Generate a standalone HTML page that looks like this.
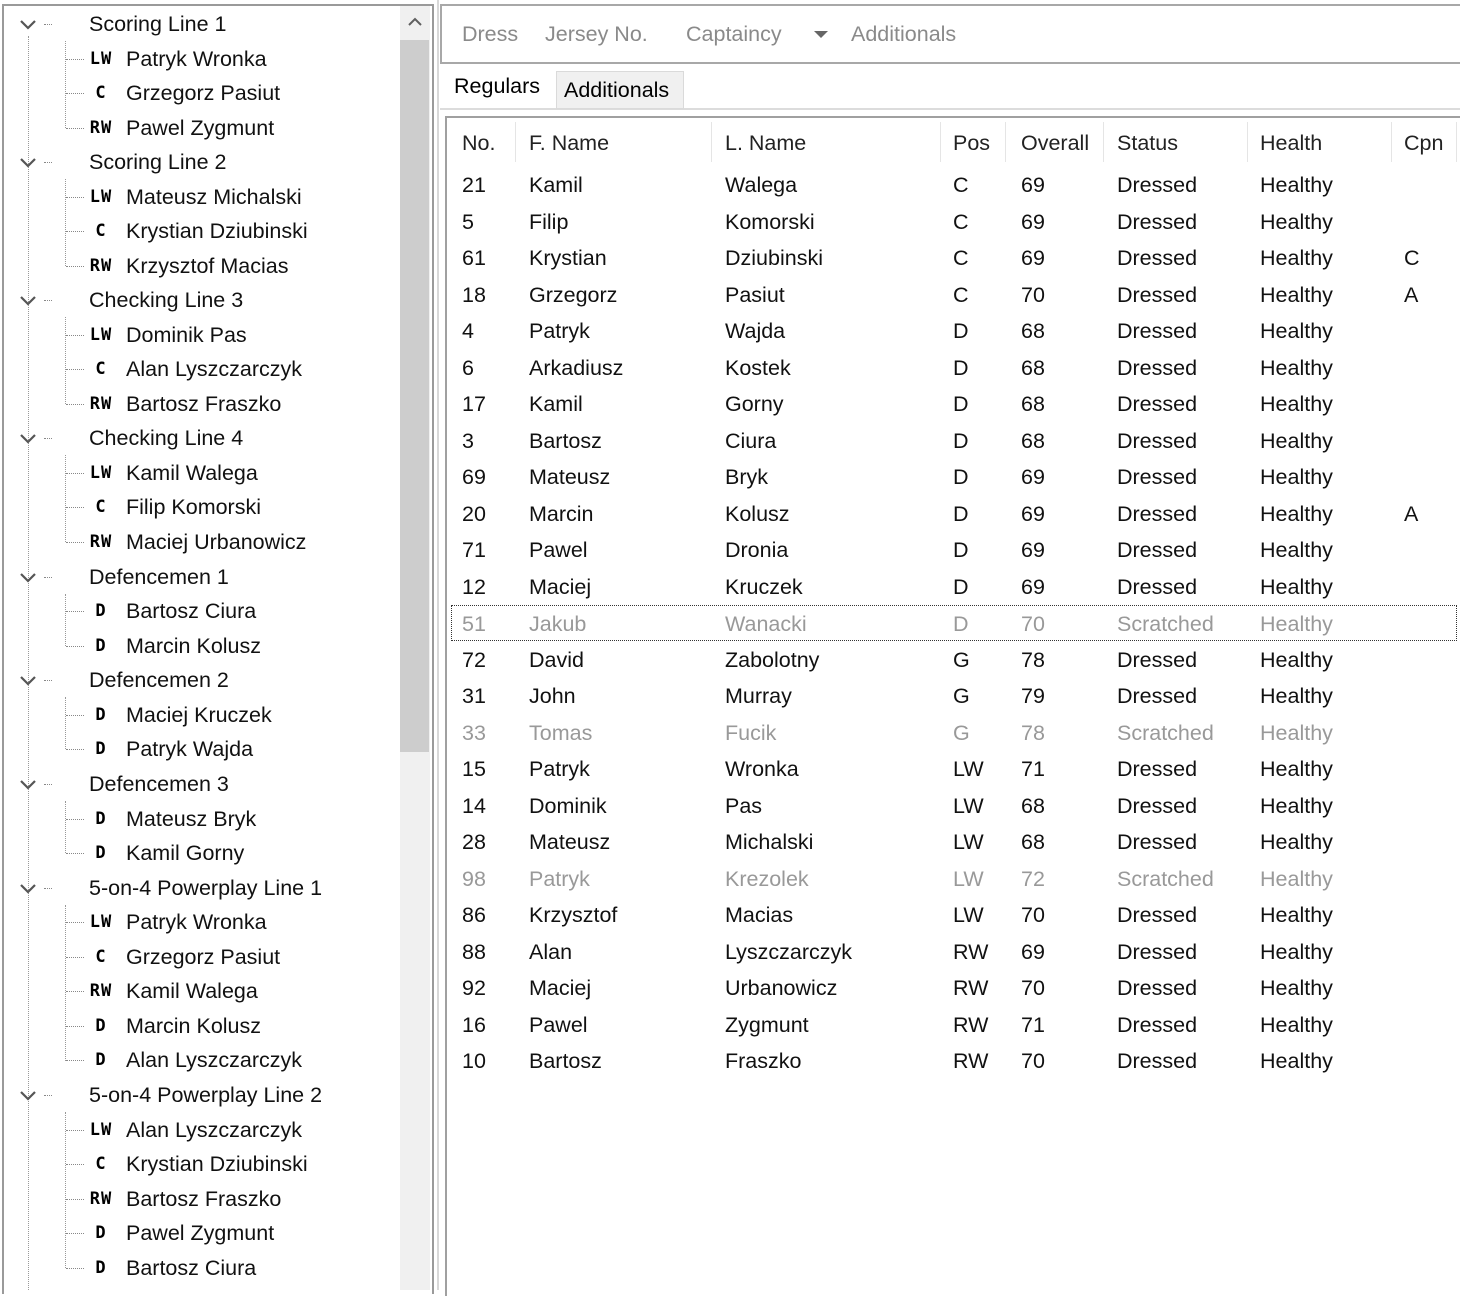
<!DOCTYPE html>
<html><head><meta charset="utf-8"><style>
*{margin:0;padding:0;box-sizing:border-box}
body{width:1460px;height:1290px;background:#fff;font-family:"Liberation Sans",sans-serif;font-size:21.5px;color:#111;position:relative;overflow:hidden}
.a{position:absolute;white-space:nowrap}
.tr{position:absolute;left:0;height:34px;line-height:34px;width:400px}
.tr .chev{position:absolute;left:18px;top:8px;width:20px;height:20px}
.tr .hd{position:absolute;left:89px}
.tr .dot{position:absolute;left:44px;top:17px;width:8px;border-top:1px dotted #888}
.tr .st{position:absolute;left:66px;top:17px;width:18px;border-top:1px dotted #888}
.tr .pos{position:absolute;left:83px;width:36px;text-align:center;font-family:"DejaVu Sans Mono","Liberation Mono",monospace;font-weight:bold;font-size:17px;color:#000;letter-spacing:1px}
.tr .nm{position:absolute;left:126px}
.vl{position:absolute;border-left:1px dotted #999}
.row{position:absolute;left:448px;width:1010px;height:36px;line-height:36px}
.row span{position:absolute}
.c1{left:14px}.c2{left:81px}.c3{left:277px}.c4{left:505px}.c5{left:573px}.c6{left:669px}.c7{left:812px}.c8{left:956px}
.g{color:#999}
.hsep{position:absolute;top:122px;height:40px;border-left:1px solid #e5e5e5}
</style></head><body>
<div class="a" style="left:2px;top:4px;width:432px;height:1290px;border:2px solid #9a9a9a;border-bottom:none"></div>
<div class="a" style="left:400px;top:6px;width:30px;height:1284px;background:#f0f0f0"></div>
<div class="a" style="left:400px;top:40px;width:29px;height:712px;background:#cdcdcd"></div>
<svg class="a" style="left:405px;top:14px" width="20" height="16"><path d="M4 11 L10 5 L16 11" fill="none" stroke="#606060" stroke-width="2"/></svg>
<div class="vl" style="left:28px;top:36px;height:1254px"></div>
<div class="vl" style="left:65px;top:41px;height:87px"></div>
<div class="vl" style="left:65px;top:179px;height:87px"></div>
<div class="vl" style="left:65px;top:317px;height:87px"></div>
<div class="vl" style="left:65px;top:455px;height:87px"></div>
<div class="vl" style="left:65px;top:594px;height:52px"></div>
<div class="vl" style="left:65px;top:697px;height:52px"></div>
<div class="vl" style="left:65px;top:801px;height:52px"></div>
<div class="vl" style="left:65px;top:905px;height:156px"></div>
<div class="vl" style="left:65px;top:1112px;height:156px"></div>

<div class="tr" style="top:7px"><svg class="chev"><path d="M3 6 L10 13 L17 6" fill="none" stroke="#555" stroke-width="2.2"/></svg><div class="dot"></div><span class="hd">Scoring Line 1</span></div>
<div class="tr" style="top:42px"><div class="st"></div><span class="pos">LW</span><span class="nm">Patryk Wronka</span></div>
<div class="tr" style="top:76px"><div class="st"></div><span class="pos">C</span><span class="nm">Grzegorz Pasiut</span></div>
<div class="tr" style="top:111px"><div class="st"></div><span class="pos">RW</span><span class="nm">Pawel Zygmunt</span></div>
<div class="tr" style="top:145px"><svg class="chev"><path d="M3 6 L10 13 L17 6" fill="none" stroke="#555" stroke-width="2.2"/></svg><div class="dot"></div><span class="hd">Scoring Line 2</span></div>
<div class="tr" style="top:180px"><div class="st"></div><span class="pos">LW</span><span class="nm">Mateusz Michalski</span></div>
<div class="tr" style="top:214px"><div class="st"></div><span class="pos">C</span><span class="nm">Krystian Dziubinski</span></div>
<div class="tr" style="top:249px"><div class="st"></div><span class="pos">RW</span><span class="nm">Krzysztof Macias</span></div>
<div class="tr" style="top:283px"><svg class="chev"><path d="M3 6 L10 13 L17 6" fill="none" stroke="#555" stroke-width="2.2"/></svg><div class="dot"></div><span class="hd">Checking Line 3</span></div>
<div class="tr" style="top:318px"><div class="st"></div><span class="pos">LW</span><span class="nm">Dominik Pas</span></div>
<div class="tr" style="top:352px"><div class="st"></div><span class="pos">C</span><span class="nm">Alan Lyszczarczyk</span></div>
<div class="tr" style="top:387px"><div class="st"></div><span class="pos">RW</span><span class="nm">Bartosz Fraszko</span></div>
<div class="tr" style="top:421px"><svg class="chev"><path d="M3 6 L10 13 L17 6" fill="none" stroke="#555" stroke-width="2.2"/></svg><div class="dot"></div><span class="hd">Checking Line 4</span></div>
<div class="tr" style="top:456px"><div class="st"></div><span class="pos">LW</span><span class="nm">Kamil Walega</span></div>
<div class="tr" style="top:490px"><div class="st"></div><span class="pos">C</span><span class="nm">Filip Komorski</span></div>
<div class="tr" style="top:525px"><div class="st"></div><span class="pos">RW</span><span class="nm">Maciej Urbanowicz</span></div>
<div class="tr" style="top:560px"><svg class="chev"><path d="M3 6 L10 13 L17 6" fill="none" stroke="#555" stroke-width="2.2"/></svg><div class="dot"></div><span class="hd">Defencemen 1</span></div>
<div class="tr" style="top:594px"><div class="st"></div><span class="pos">D</span><span class="nm">Bartosz Ciura</span></div>
<div class="tr" style="top:629px"><div class="st"></div><span class="pos">D</span><span class="nm">Marcin Kolusz</span></div>
<div class="tr" style="top:663px"><svg class="chev"><path d="M3 6 L10 13 L17 6" fill="none" stroke="#555" stroke-width="2.2"/></svg><div class="dot"></div><span class="hd">Defencemen 2</span></div>
<div class="tr" style="top:698px"><div class="st"></div><span class="pos">D</span><span class="nm">Maciej Kruczek</span></div>
<div class="tr" style="top:732px"><div class="st"></div><span class="pos">D</span><span class="nm">Patryk Wajda</span></div>
<div class="tr" style="top:767px"><svg class="chev"><path d="M3 6 L10 13 L17 6" fill="none" stroke="#555" stroke-width="2.2"/></svg><div class="dot"></div><span class="hd">Defencemen 3</span></div>
<div class="tr" style="top:802px"><div class="st"></div><span class="pos">D</span><span class="nm">Mateusz Bryk</span></div>
<div class="tr" style="top:836px"><div class="st"></div><span class="pos">D</span><span class="nm">Kamil Gorny</span></div>
<div class="tr" style="top:871px"><svg class="chev"><path d="M3 6 L10 13 L17 6" fill="none" stroke="#555" stroke-width="2.2"/></svg><div class="dot"></div><span class="hd">5-on-4 Powerplay Line 1</span></div>
<div class="tr" style="top:905px"><div class="st"></div><span class="pos">LW</span><span class="nm">Patryk Wronka</span></div>
<div class="tr" style="top:940px"><div class="st"></div><span class="pos">C</span><span class="nm">Grzegorz Pasiut</span></div>
<div class="tr" style="top:974px"><div class="st"></div><span class="pos">RW</span><span class="nm">Kamil Walega</span></div>
<div class="tr" style="top:1009px"><div class="st"></div><span class="pos">D</span><span class="nm">Marcin Kolusz</span></div>
<div class="tr" style="top:1043px"><div class="st"></div><span class="pos">D</span><span class="nm">Alan Lyszczarczyk</span></div>
<div class="tr" style="top:1078px"><svg class="chev"><path d="M3 6 L10 13 L17 6" fill="none" stroke="#555" stroke-width="2.2"/></svg><div class="dot"></div><span class="hd">5-on-4 Powerplay Line 2</span></div>
<div class="tr" style="top:1113px"><div class="st"></div><span class="pos">LW</span><span class="nm">Alan Lyszczarczyk</span></div>
<div class="tr" style="top:1147px"><div class="st"></div><span class="pos">C</span><span class="nm">Krystian Dziubinski</span></div>
<div class="tr" style="top:1182px"><div class="st"></div><span class="pos">RW</span><span class="nm">Bartosz Fraszko</span></div>
<div class="tr" style="top:1216px"><div class="st"></div><span class="pos">D</span><span class="nm">Pawel Zygmunt</span></div>
<div class="tr" style="top:1251px"><div class="st"></div><span class="pos">D</span><span class="nm">Bartosz Ciura</span></div>

<div class="a" style="left:437px;top:0;width:2px;height:1290px;background:#d8d8d8"></div>
<div class="a" style="left:440px;top:4px;width:1030px;height:60px;border:2px solid #a8a8a8;background:#fff"></div>
<div class="a" style="left:462px;top:22px;color:#8a8a8a">Dress</div>
<div class="a" style="left:545px;top:22px;color:#8a8a8a">Jersey No.</div>
<div class="a" style="left:686px;top:22px;color:#8a8a8a">Captaincy</div>
<svg class="a" style="left:813px;top:30px" width="16" height="10"><path d="M1 1 L15 1 L8 8Z" fill="#666"/></svg>
<div class="a" style="left:851px;top:22px;color:#8a8a8a">Additionals</div>
<div class="a" style="left:440px;top:108px;width:1030px;border-top:2px solid #dcdcdc"></div>
<div class="a" style="left:556px;top:71px;width:128px;height:38px;background:#f0f0f0;border:1px solid #dadada"></div>
<div class="a" style="left:454px;top:74px;color:#000">Regulars</div>
<div class="a" style="left:564px;top:78px;color:#000">Additionals</div>
<div class="a" style="left:445px;top:116px;width:1020px;height:1180px;border:2px solid #a0a0a0;border-right:none;border-bottom:none;background:#fff"></div>
<div class="hsep" style="left:515px"></div><div class="hsep" style="left:711px"></div><div class="hsep" style="left:940px"></div><div class="hsep" style="left:1005px"></div><div class="hsep" style="left:1103px"></div><div class="hsep" style="left:1247px"></div><div class="hsep" style="left:1391px"></div><div class="hsep" style="left:1456px"></div>
<div class="row" style="top:125px;color:#222"><span class="c1">No.</span><span class="c2">F. Name</span><span class="c3">L. Name</span><span class="c4">Pos</span><span class="c5">Overall</span><span class="c6">Status</span><span class="c7">Health</span><span class="c8">Cpn</span></div>

<div class="row" style="top:167px"><span class="c1">21</span><span class="c2">Kamil</span><span class="c3">Walega</span><span class="c4">C</span><span class="c5">69</span><span class="c6">Dressed</span><span class="c7">Healthy</span></div>
<div class="row" style="top:203.5px"><span class="c1">5</span><span class="c2">Filip</span><span class="c3">Komorski</span><span class="c4">C</span><span class="c5">69</span><span class="c6">Dressed</span><span class="c7">Healthy</span></div>
<div class="row" style="top:240px"><span class="c1">61</span><span class="c2">Krystian</span><span class="c3">Dziubinski</span><span class="c4">C</span><span class="c5">69</span><span class="c6">Dressed</span><span class="c7">Healthy</span><span class="c8">C</span></div>
<div class="row" style="top:276.5px"><span class="c1">18</span><span class="c2">Grzegorz</span><span class="c3">Pasiut</span><span class="c4">C</span><span class="c5">70</span><span class="c6">Dressed</span><span class="c7">Healthy</span><span class="c8">A</span></div>
<div class="row" style="top:313px"><span class="c1">4</span><span class="c2">Patryk</span><span class="c3">Wajda</span><span class="c4">D</span><span class="c5">68</span><span class="c6">Dressed</span><span class="c7">Healthy</span></div>
<div class="row" style="top:349.5px"><span class="c1">6</span><span class="c2">Arkadiusz</span><span class="c3">Kostek</span><span class="c4">D</span><span class="c5">68</span><span class="c6">Dressed</span><span class="c7">Healthy</span></div>
<div class="row" style="top:386px"><span class="c1">17</span><span class="c2">Kamil</span><span class="c3">Gorny</span><span class="c4">D</span><span class="c5">68</span><span class="c6">Dressed</span><span class="c7">Healthy</span></div>
<div class="row" style="top:422.5px"><span class="c1">3</span><span class="c2">Bartosz</span><span class="c3">Ciura</span><span class="c4">D</span><span class="c5">68</span><span class="c6">Dressed</span><span class="c7">Healthy</span></div>
<div class="row" style="top:459px"><span class="c1">69</span><span class="c2">Mateusz</span><span class="c3">Bryk</span><span class="c4">D</span><span class="c5">69</span><span class="c6">Dressed</span><span class="c7">Healthy</span></div>
<div class="row" style="top:495.5px"><span class="c1">20</span><span class="c2">Marcin</span><span class="c3">Kolusz</span><span class="c4">D</span><span class="c5">69</span><span class="c6">Dressed</span><span class="c7">Healthy</span><span class="c8">A</span></div>
<div class="row" style="top:532px"><span class="c1">71</span><span class="c2">Pawel</span><span class="c3">Dronia</span><span class="c4">D</span><span class="c5">69</span><span class="c6">Dressed</span><span class="c7">Healthy</span></div>
<div class="row" style="top:568.5px"><span class="c1">12</span><span class="c2">Maciej</span><span class="c3">Kruczek</span><span class="c4">D</span><span class="c5">69</span><span class="c6">Dressed</span><span class="c7">Healthy</span></div>
<div class="row g" style="top:605px;border:1px dotted #333;left:451px;width:1006px"><span class="c1" style="left:10px">51</span><span class="c2" style="left:77px">Jakub</span><span class="c3" style="left:273px">Wanacki</span><span class="c4" style="left:501px">D</span><span class="c5" style="left:569px">70</span><span class="c6" style="left:665px">Scratched</span><span class="c7" style="left:808px">Healthy</span></div>
<div class="row" style="top:641.5px"><span class="c1">72</span><span class="c2">David</span><span class="c3">Zabolotny</span><span class="c4">G</span><span class="c5">78</span><span class="c6">Dressed</span><span class="c7">Healthy</span></div>
<div class="row" style="top:678px"><span class="c1">31</span><span class="c2">John</span><span class="c3">Murray</span><span class="c4">G</span><span class="c5">79</span><span class="c6">Dressed</span><span class="c7">Healthy</span></div>
<div class="row g" style="top:714.5px"><span class="c1">33</span><span class="c2">Tomas</span><span class="c3">Fucik</span><span class="c4">G</span><span class="c5">78</span><span class="c6">Scratched</span><span class="c7">Healthy</span></div>
<div class="row" style="top:751px"><span class="c1">15</span><span class="c2">Patryk</span><span class="c3">Wronka</span><span class="c4">LW</span><span class="c5">71</span><span class="c6">Dressed</span><span class="c7">Healthy</span></div>
<div class="row" style="top:787.5px"><span class="c1">14</span><span class="c2">Dominik</span><span class="c3">Pas</span><span class="c4">LW</span><span class="c5">68</span><span class="c6">Dressed</span><span class="c7">Healthy</span></div>
<div class="row" style="top:824px"><span class="c1">28</span><span class="c2">Mateusz</span><span class="c3">Michalski</span><span class="c4">LW</span><span class="c5">68</span><span class="c6">Dressed</span><span class="c7">Healthy</span></div>
<div class="row g" style="top:860.5px"><span class="c1">98</span><span class="c2">Patryk</span><span class="c3">Krezolek</span><span class="c4">LW</span><span class="c5">72</span><span class="c6">Scratched</span><span class="c7">Healthy</span></div>
<div class="row" style="top:897px"><span class="c1">86</span><span class="c2">Krzysztof</span><span class="c3">Macias</span><span class="c4">LW</span><span class="c5">70</span><span class="c6">Dressed</span><span class="c7">Healthy</span></div>
<div class="row" style="top:933.5px"><span class="c1">88</span><span class="c2">Alan</span><span class="c3">Lyszczarczyk</span><span class="c4">RW</span><span class="c5">69</span><span class="c6">Dressed</span><span class="c7">Healthy</span></div>
<div class="row" style="top:970px"><span class="c1">92</span><span class="c2">Maciej</span><span class="c3">Urbanowicz</span><span class="c4">RW</span><span class="c5">70</span><span class="c6">Dressed</span><span class="c7">Healthy</span></div>
<div class="row" style="top:1006.5px"><span class="c1">16</span><span class="c2">Pawel</span><span class="c3">Zygmunt</span><span class="c4">RW</span><span class="c5">71</span><span class="c6">Dressed</span><span class="c7">Healthy</span></div>
<div class="row" style="top:1043px"><span class="c1">10</span><span class="c2">Bartosz</span><span class="c3">Fraszko</span><span class="c4">RW</span><span class="c5">70</span><span class="c6">Dressed</span><span class="c7">Healthy</span></div>
</body></html>
